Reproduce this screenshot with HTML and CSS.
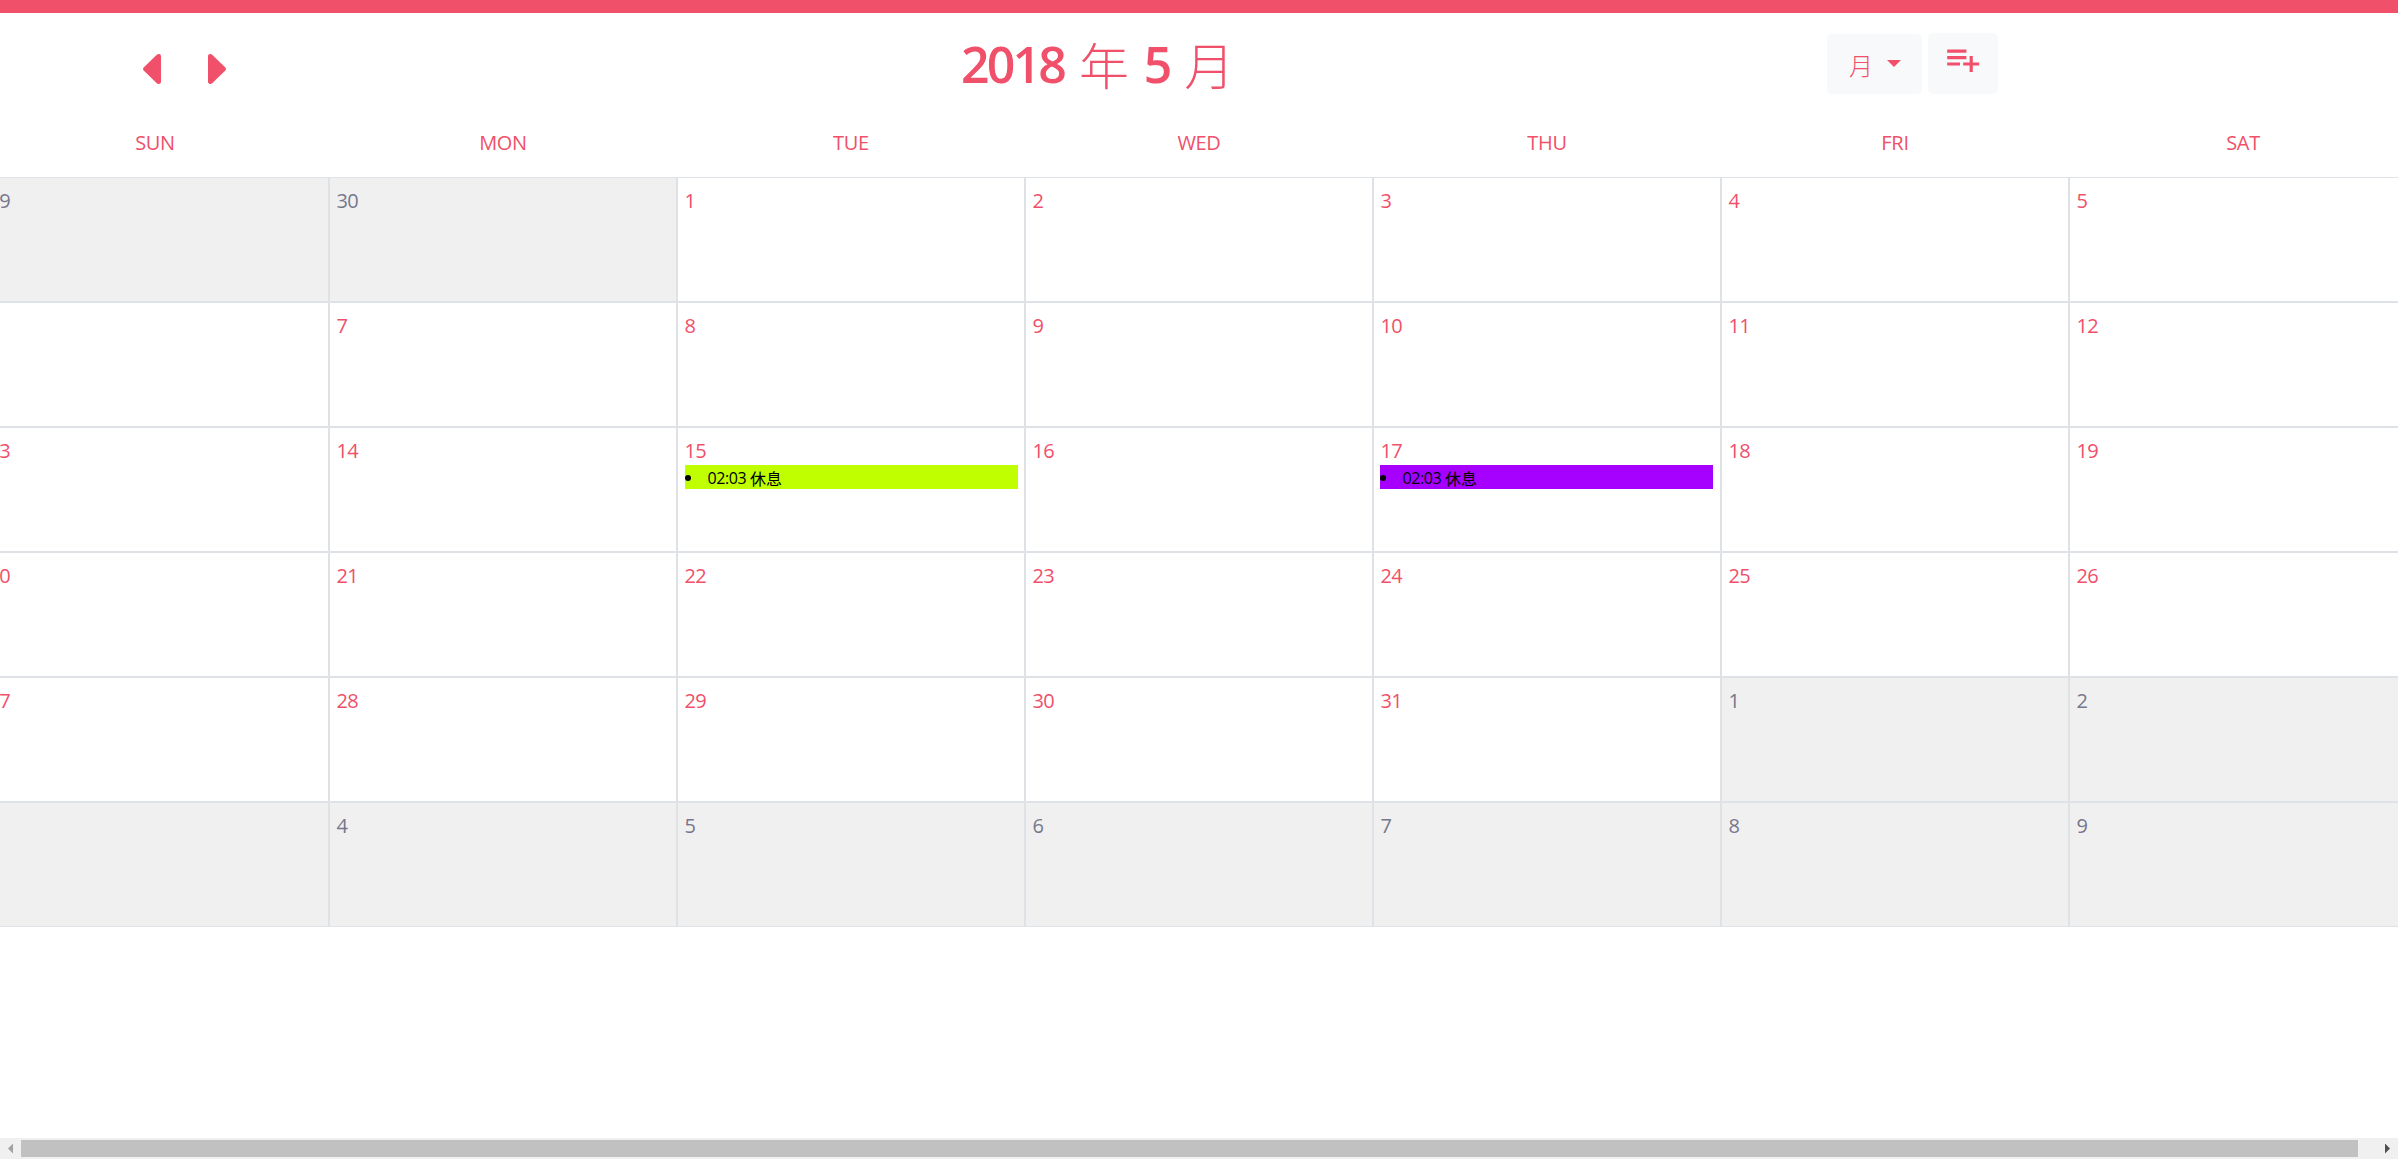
FILE: index.html
```html
<!DOCTYPE html>
<html lang="zh-Hant">
<head>
<meta charset="utf-8">
<title>2018 年 5 月</title>
<link rel="stylesheet" href="styles.css">
</head>
<body>
<div class="topbar"></div>
<header class="header">
  <nav class="nav">
    <svg class="arrow" viewBox="0 0 18 30"><path d="M.7 13.6 13.8.7C15.500-.6 18-.1 18 2.200V27.800C18 30.100 15.500 30.600 13.800 29.300L.7 16.400Q-.7 15 .7 13.600Z"/></svg>
    <svg class="arrow arrow-next" viewBox="0 0 18 30"><path d="M.7 13.6 13.8.7C15.500-.6 18-.1 18 2.200V27.800C18 30.100 15.500 30.600 13.800 29.300L.7 16.400Q-.7 15 .7 13.600Z"/></svg>
  </nav>
  <h1 class="title">2018 <span class="han">年</span> 5 <span class="han">月</span></h1>
  <div class="actions">
    <div class="btn btn-view"><span>月</span><i class="caret"></i></div>
    <div class="btn btn-add"><svg class="add-icon" viewBox="0 0 24 24"><path d="M14 10H2v2h12v-2zm0-4H2v2h12V6zm4 8v-4h-2v4h-4v2h4v4h2v-4h4v-2h-4zM2 16h8v-2H2v2z"/></svg></div>
  </div>
</header>
<main class="viewport">
  <div class="weekdays"><div>SUN</div><div>MON</div><div>TUE</div><div>WED</div><div>THU</div><div>FRI</div><div>SAT</div></div>
  <div class="month">
    <div class="day out">29</div><div class="day out">30</div><div class="day">1</div><div class="day">2</div><div class="day">3</div><div class="day">4</div><div class="day">5</div>
    <div class="day">6</div><div class="day">7</div><div class="day">8</div><div class="day">9</div><div class="day">10</div><div class="day">11</div><div class="day">12</div>
    <div class="day">13</div><div class="day">14</div><div class="day">15<div class="event lime"><i class="dot"></i><span class="time">02:03</span><span class="label">休息</span></div></div><div class="day">16</div><div class="day">17<div class="event violet"><i class="dot"></i><span class="time">02:03</span><span class="label">休息</span></div></div><div class="day">18</div><div class="day">19</div>
    <div class="day">20</div><div class="day">21</div><div class="day">22</div><div class="day">23</div><div class="day">24</div><div class="day">25</div><div class="day">26</div>
    <div class="day">27</div><div class="day">28</div><div class="day">29</div><div class="day">30</div><div class="day">31</div><div class="day out">1</div><div class="day out">2</div>
    <div class="day out">3</div><div class="day out">4</div><div class="day out">5</div><div class="day out">6</div><div class="day out">7</div><div class="day out">8</div><div class="day out">9</div>
  </div>
</main>
<div class="scrollbar"><i class="sb-left"></i><div class="thumb"></div><i class="sb-right"></i></div>
</body>
</html>
```
FILE: styles.css
```css
* { box-sizing: border-box; }
body {
  margin: 0;
  height: 1159px;
  display: flex;
  flex-direction: column;
  overflow: hidden;
  background: #fff;
  color: #f0506a;
  font: 20px/30px "Open Sans", "Noto Sans CJK TC", sans-serif;
}
.topbar { height: 13px; background: #f0506a; }
.header {
  height: 91px;
  display: grid;
  grid-template-columns: 961px 866px auto;
}
.nav { display: flex; gap: 47px; padding: 41px 0 0 143px; }
.arrow { width: 18px; height: 30px; fill: #f0506a; }
.arrow-next { transform: scaleX(-1); }
.title {
  margin: 0;
  padding-top: 21px;
  font-size: 50px;
  line-height: 60px;
  font-weight: 600;
  letter-spacing: -2.8px;
  word-spacing: 4.6px;
  white-space: nowrap;
}
.han {
  font-family: "Noto Sans CJK TC", sans-serif;
  font-weight: 300;
  letter-spacing: 0;
  vertical-align: -2px;
  line-height: 1;
}
.actions { display: flex; gap: 6px; padding-top: 20px; align-items: flex-start; }
.btn { display: flex; background: #f8f9fa; border-radius: 5px; }
.btn-view {
  width: 95px;
  height: 60px;
  margin-top: 1px;
  padding: 16px 0 0 22px;
  gap: 14px;
  font-weight: 300;
  font-size: 24px;
  font-family: "Noto Sans CJK TC", sans-serif;
}
.caret {
  width: 14px;
  height: 7px;
  margin-top: 10px;
  background: #f0506a;
  clip-path: polygon(0 0, 100% 0, 50% 100%);
}
.btn-add { width: 70px; height: 61px; padding: 6.500px 0 0 15.800px; }
.add-icon { width: 38.400px; height: 38.400px; fill: #f0506a; }
.viewport { flex: 1; overflow: hidden; }
.weekdays, .month {
  display: grid;
  grid-template-columns: repeat(7, 348px);
  margin-left: -19px;
  width: 2436px;
}
.weekdays { height: 73px; padding-top: 24px; text-align: center; letter-spacing: -.3px; }
.month { grid-auto-rows: 125px; }
.day {
  border: 1px solid #dee2e6;
  padding: 8px 6px 0 7px;
  letter-spacing: -.6px;
  text-indent: -.6px;
}
.out { background: #f0f0f0; color: #77778c; }
.event {
  display: flex;
  align-items: center;
  height: 24px;
  margin-top: -1px;
  color: #000;
  font-size: 16px;
  line-height: 24px;
  letter-spacing: 0;
  text-indent: 0;
}
.event span { padding-top: 2px; }
.lime { background: #bfff00; }
.violet { background: #a600ff; margin-left: -1px; margin-right: 1px; }
.dot { width: 6px; height: 6px; margin: 2px 16px 0 0; border-radius: 50%; background: #000; }
.time { width: 43px; letter-spacing: -.4px; padding-left: .5px; }
.label { font-family: "Noto Sans CJK TC", sans-serif; }
.scrollbar {
  height: 21px;
  display: flex;
  align-items: center;
  background: #f0f0f0;
}
.sb-left, .sb-right { width: 5px; height: 10px; }
.sb-left { margin: 0 8px; background: #a3a3a3; clip-path: polygon(100% 0, 100% 100%, 0 50%); }
.sb-right { margin-left: 27px; background: #505050; clip-path: polygon(0 0, 100% 50%, 0 100%); }
.thumb { width: 2337px; height: 17px; background: #c1c1c1; }
```
